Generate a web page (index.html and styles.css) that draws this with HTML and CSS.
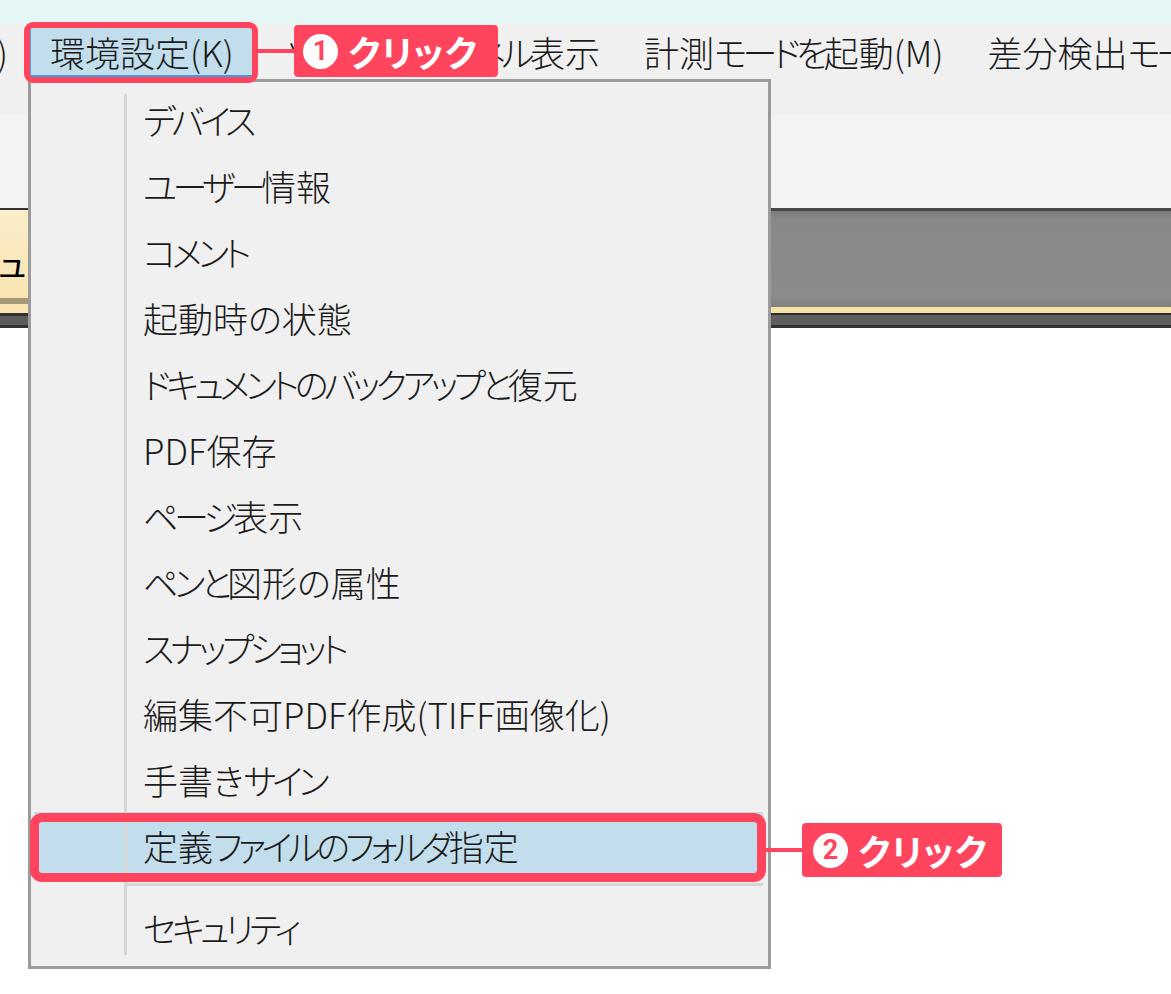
FILE: index.html
```html
<!DOCTYPE html>
<html lang="ja">
<head>
    <meta charset="UTF-8">
    <meta name="viewport" content="width=device-width, initial-scale=1.0">
    <title>環境設定メニュー</title>
    <link rel="stylesheet" href="styles.css">
</head>
<body>

    <div class="app">
        <div class="title-strip"></div>

        <div class="menubar">
            <span class="menubar-item cut">)</span>
            <span class="menubar-item hot">環境設定(K)</span>
            <span class="menubar-item wide"><span class="kn">ツールバー・パネル</span>表示</span>
            <span class="menubar-item">計測<span class="kn">モードを</span>起動(M)</span>
            <span class="menubar-item">差分検出<span class="kn">モード</span>(D)</span>
        </div>
        <div class="menubar-rest"></div>
        <div class="toolbar"></div>

        <div class="doc-band">
            <div class="doc-tab"><span>ュ</span></div>
            <div class="doc-strip"></div>
        </div>
        <div class="canvas"></div>

        <!-- ドロップダウンメニュー -->
        <div class="dropdown">
            <div class="dropdown-item"><span class="kn">デバイス</span></div>
            <div class="dropdown-item"><span class="kn">ユーザー</span>情報</div>
            <div class="dropdown-item"><span class="kn">コメント</span></div>
            <div class="dropdown-item">起動時の状態</div>
            <div class="dropdown-item"><span class="kn">ドキュメントのバックアップと</span>復元</div>
            <div class="dropdown-item">PDF保存</div>
            <div class="dropdown-item"><span class="kn">ページ</span>表示</div>
            <div class="dropdown-item"><span class="kn">ペンと</span>図形の属性</div>
            <div class="dropdown-item"><span class="kn">スナップショット</span></div>
            <div class="dropdown-item">編集不可PDF作成(TIFF画像化)</div>
            <div class="dropdown-item">手書き<span class="kn">サイン</span></div>
            <div class="dropdown-item active">定義<span class="kn">ファイルのフォルダ</span>指定</div>
            <div class="dropdown-sep"></div>
            <div class="dropdown-item"><span class="kn">セキュリティ</span></div>
        </div>

        <!-- 注釈 -->
        <div class="mark mark-menu"></div>
        <div class="mark mark-item"></div>

        <div class="callout callout-1">
            <span class="callout-line"></span>
            <span class="callout-label"><span class="num">1</span>クリック</span>
        </div>
        <div class="callout callout-2">
            <span class="callout-line"></span>
            <span class="callout-label"><span class="num">2</span>クリック</span>
        </div>
    </div>

</body>
</html>
```

FILE: styles.css
```css
body {
    margin: 0;
    padding: 0;
    background-color: #fff;
    font-family: "Noto Sans CJK JP", "Noto Sans", sans-serif;
    font-feature-settings: "palt";
    color: #1b1b1b;
    overflow: hidden;
}

.app {
    position: relative;
    width: 1171px;
    height: 994px;
    overflow: hidden;
}

.title-strip {
    height: 24px;
    background-color: #e4f7f5;
}

/* かなを少し詰める */
.kn {
    letter-spacing: -4.5px;
}

/* メニューバー */
.menubar {
    display: flex;
    align-items: center;
    height: 56px;
    background-color: #f0f0f0;
    font-size: 35px;
    font-weight: 300;
    white-space: nowrap;
}

.menubar-item {
    flex-shrink: 0;
    padding: 0 22px;
    line-height: 50px;
}

.menubar-item.cut {
    padding: 0;
    margin-left: -3px;
    margin-right: 22px;
}

.menubar-item.hot {
    box-sizing: border-box;
    width: 222px;
    height: 50px;
    padding: 0 0 0 19px;
    background-color: #c2deec;
    border-left: 1px solid #4aa3df;
    border-bottom: 2px solid #3d9be0;
}

.menubar-item.wide {
    width: 326px;
    text-align: right;
}

.menubar-rest {
    height: 35px;
    background-color: #f0f0f0;
}

.toolbar {
    height: 93px;
    background-color: #f3f3f3;
}

/* ドキュメントタブ */
.doc-band {
    display: flex;
    height: 120px;
}

.doc-tab {
    width: 28px;
    overflow: hidden;
    font-size: 34px;
    line-height: 1;
    padding-top: 38px;
    box-sizing: border-box;
    color: #000;
    background: linear-gradient(to bottom,
        #343434 0, #343434 2px,
        #fbedc9 2px, #f9e4b2 90px,
        #a39878 90px, #a39878 96px,
        #f9e4b2 96px, #f9e4b2 105px,
        #333 105px, #333 108px,
        #5c5c5c 108px, #5c5c5c 117px,
        #333 117px);
}

.doc-tab span {
    display: block;
    margin-left: -2px;
}

.doc-strip {
    flex: 1;
    background: linear-gradient(to bottom,
        #474747 0, #474747 3px,
        #7c7c7c 3px, #888 12px, #8b8b8b 90px, #7f7f7f 99px,
        #f8e1a6 99px, #f8e1a6 105px,
        #2e2e2e 105px, #2e2e2e 107px,
        #5e5e5e 107px, #5e5e5e 117px,
        #333 117px);
}

.canvas {
    height: 666px;
    background-color: #fff;
}

/* ドロップダウン */
.dropdown {
    position: absolute;
    left: 28px;
    top: 79px;
    width: 743px;
    height: 890px;
    box-sizing: border-box;
    padding-top: 4px;
    border: 3px solid #9b9b9b;
    background-color: #f0f0f0;
    font-size: 35px;
    font-weight: 300;
}

.dropdown::before {
    content: "";
    position: absolute;
    left: 93px;
    top: 12px;
    bottom: 11px;
    width: 3px;
    background-color: #d6d6d6;
}

.dropdown-item {
    display: flex;
    align-items: center;
    height: 66px;
    margin: 0 5px 0 3px;
    padding-left: 109px;
    white-space: nowrap;
}

.dropdown-item.active {
    background-color: #c2deec;
}

.dropdown-sep {
    height: 3px;
    margin: 5px 5px 8px 96px;
    background-color: #d6d6d6;
}

/* 注釈の枠と吹き出し */
.mark {
    position: absolute;
    box-sizing: border-box;
    border: 6px solid #ff455e;
    border-radius: 9px;
}

.mark-menu {
    left: 24px;
    top: 22px;
    width: 234px;
    height: 61px;
}

.mark-item {
    left: 30px;
    top: 813px;
    width: 736px;
    height: 69px;
    border-width: 9px;
    border-radius: 12px;
}

.callout {
    position: absolute;
    display: flex;
    align-items: center;
}

.callout-1 {
    left: 258px;
    top: 25px;
}

.callout-2 {
    left: 766px;
    top: 823px;
}

.callout-line {
    width: 36px;
    height: 4px;
    background-color: #ff455e;
}

.callout-label {
    display: flex;
    align-items: center;
    gap: 10px;
    box-sizing: border-box;
    width: 204px;
    height: 52px;
    padding-left: 9px;
    border-radius: 4px;
    background-color: #ff455e;
    color: #fff;
    font-size: 36px;
    font-weight: bold;
    letter-spacing: 1px;
}

.callout-2 .callout-label {
    width: 200px;
    height: 54px;
    padding-left: 11px;
}

.num {
    display: flex;
    align-items: center;
    justify-content: center;
    width: 35px;
    height: 35px;
    border-radius: 50%;
    background-color: #fff;
    color: #ff455e;
    font-family: Roboto, "Noto Sans", sans-serif;
    font-size: 27px;
    font-weight: bold;
    letter-spacing: 0;
}
```
